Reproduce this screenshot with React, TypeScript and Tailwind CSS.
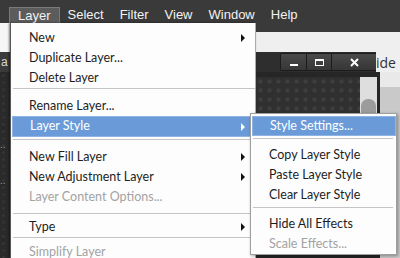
import React from "react";

type Row =
  | { kind: "sep"; cls: string }
  | { kind: "item"; label: string; sub?: boolean; disabled?: boolean; active?: boolean; h?: string };

const layerMenu: Row[] = [
  { kind: "item", label: "New", sub: true },
  { kind: "item", label: "Duplicate Layer..." },
  { kind: "item", label: "Delete Layer" },
  { kind: "sep", cls: "pt-0 pb-[7px]" },
  { kind: "item", label: "Rename Layer..." },
  { kind: "item", label: "Layer Style", sub: true, active: true, h: "h-[21px]" },
  { kind: "sep", cls: "pt-[2px] pb-[7px]" },
  { kind: "item", label: "New Fill Layer", sub: true },
  { kind: "item", label: "New Adjustment Layer", sub: true },
  { kind: "item", label: "Layer Content Options...", disabled: true },
  { kind: "sep", cls: "pt-[6px] pb-[3px]" },
  { kind: "item", label: "Type", sub: true },
  { kind: "sep", cls: "pt-0 pb-[4px]" },
  { kind: "item", label: "Simplify Layer", disabled: true },
];

const styleMenu: Row[] = [
  { kind: "item", label: "Style Settings...", active: true },
  { kind: "sep", cls: "pt-[2px] pb-[6px]" },
  { kind: "item", label: "Copy Layer Style" },
  { kind: "item", label: "Paste Layer Style" },
  { kind: "item", label: "Clear Layer Style" },
  { kind: "sep", cls: "pt-[2px] pb-[6px]" },
  { kind: "item", label: "Hide All Effects" },
  { kind: "item", label: "Scale Effects...", disabled: true },
];

const MenuRows = ({ rows, sepInset }: { rows: Row[]; sepInset: string }) => (
  <>
    {rows.map((r, i) => {
      if (r.kind === "sep") {
        return (
          <div key={i} className={r.cls}>
            <div className={`h-px bg-[#c4c4c4] ${sepInset}`} />
          </div>
        );
      }
      return (
        <div
          key={i}
          className={`flex items-center justify-between pl-[18px] pr-[10px] ${r.h ?? "h-[20px]"} ${
            r.active
              ? "bg-[#6a9bd8] text-white ml-[1px] pl-[17px] shadow-[inset_0_0_0_1px_#8fb4e3]"
              : r.disabled
              ? "text-[#a3a3a3]"
              : "text-[#1e1e1e]"
          }`}
        >
          <span>{r.label}</span>
          {r.sub && (
            <span
              className={`w-0 h-0 border-y-[4px] border-y-transparent border-l-[4px] ${
                r.active ? "border-l-white" : "border-l-[#111]"
              }`}
            />
          )}
        </div>
      );
    })}
  </>
);

const menuBar = ["Layer", "Select", "Filter", "View", "Window", "Help"];

export default function App() {
  return (
    <div className="relative w-[400px] h-[258px] overflow-hidden bg-[#2b2b2b] font-['Liberation_Sans',Arial,sans-serif]">
      {/* menu bar */}
      <div className="h-[23px] bg-[#3a3a3a] flex items-end pl-[9px] text-[13px] text-[#f2f2f2]">
        {menuBar.map((m) => (
          <div
            key={m}
            className={`h-[16px] px-2 flex items-center ${
              m === "Layer" ? "bg-[#5c5c5c] border-t border-x border-[#7a7a7a]" : ""
            }`}
          >
            {m}
          </div>
        ))}
      </div>

      {/* desktop behind the menus */}
      <div className="flex h-[235px]">
        {/* left panel */}
        <div className="w-[256px] flex flex-col">
          <div className="h-[29px] bg-[#f6f6f6]" />
          <div className="h-[20px] bg-[#3b3b3b] flex items-center text-[12px] text-[#d8d8d8] pl-px">a</div>
          <div className="flex-1 bg-[#2a2a2a] bg-[radial-gradient(circle,#3a3a3a_0,transparent_2px)] bg-[length:7px_7px] flex flex-col text-[#9a9a9a] text-[10px] leading-none">
            <span className="mt-[68px]">..</span>
            <span className="mt-[26px]">..</span>
          </div>
        </div>
        {/* image window */}
        <div className="w-[124px] flex flex-col">
          <div className="h-[9px] bg-[#3a3a3a]" />
          <div className="h-[20px] bg-[#efefef]" />
          <div className="h-[20px] bg-[#2e2e2e] flex items-center justify-end pr-[3px]">
            <div className="flex h-[18px] border border-[#1c1c1c] rounded-[2px] overflow-hidden">
              <div className="w-[26px] bg-gradient-to-b from-[#4a4a4a] to-[#363636] border-r border-[#1c1c1c] flex items-end justify-center pb-[4px]">
                <div className="w-[8px] h-[2px] bg-white" />
              </div>
              <div className="w-[25px] bg-gradient-to-b from-[#4a4a4a] to-[#363636] border-r border-[#1c1c1c] flex items-center justify-center">
                <div className="w-[9px] h-[7px] border border-white border-t-2" />
              </div>
              <div className="w-[44px] bg-gradient-to-b from-[#4a4a4a] to-[#363636] flex items-center justify-center">
                <svg width="9" height="9" viewBox="0 0 9 9">
                  <path d="M1 1 L8 8 M8 1 L1 8" stroke="white" strokeWidth="2" />
                </svg>
              </div>
            </div>
          </div>
          <div className="flex-1 bg-[#262626] flex pt-[5px] pr-[3px]">
            <div className="w-[104px] h-[38px] bg-[#303030] bg-[radial-gradient(circle,#454545_0,transparent_3px)] bg-[length:9px_9px]" />
            <div className="w-[17px] h-[38px] bg-[#dedede] flex items-end justify-center">
              <div className="w-[15px] h-[16px] rounded-t-[7px] bg-[#9c9c9c]" />
            </div>
          </div>
        </div>
        {/* right strip */}
        <div className="flex-1 flex flex-col">
          <div className="h-[9px] bg-[#3a3a3a]" />
          <div className="h-[20px] bg-[#efefef]" />
          <div className="h-[20px] bg-[#efefef] flex items-center text-[14px] text-[#333] font-['Open_Sans',sans-serif] -ml-[4px]">
            ide
          </div>
          <div className="h-[15px] bg-[#e9e9e9]" />
          <div className="flex-1 bg-[#c9c9c9]" />
        </div>
      </div>

      {/* Layer menu */}
      <div className="absolute left-[10px] top-[23px] w-[246px] h-[245px] bg-[#fdfdfd] border-l border-l-[#555] border-r border-r-[#a9a9a9] pt-[5px] text-[12.5px] font-['Lato',sans-serif] shadow-[-1px_0_2px_rgba(0,0,0,0.5)]">
        <MenuRows rows={layerMenu} sepInset="ml-[2px]" />
      </div>

      {/* Layer Style submenu */}
      <div className="absolute left-[250px] top-[113px] w-[147px] bg-[#fdfdfd] border border-[#9f9f9f] pt-[2px] text-[12.5px] font-['Lato',sans-serif] shadow-[1px_1px_3px_rgba(0,0,0,0.35)]">
        <MenuRows rows={styleMenu} sepInset="ml-[2px] mr-[3px]" />
      </div>
    </div>
  );
}
